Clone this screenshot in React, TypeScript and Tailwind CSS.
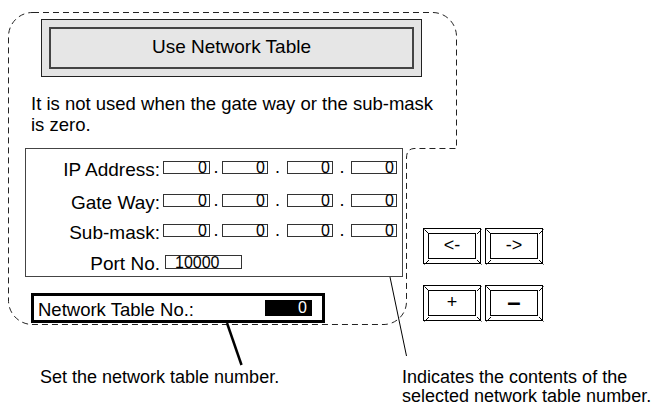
import React from "react";

function Field({ value }: { value: string }) {
  return (
    <div className="h-[13px] border border-[#333] flex justify-end items-start pr-[2px] text-[16px] leading-[12px]">
      {value}
    </div>
  );
}

function Dot({ w }: { w: string }) {
  return <span className={`${w} text-center text-[18px] leading-[13px]`}>.</span>;
}

function AddrRow({ label }: { label: string }) {
  return (
    <div className="flex items-start h-[13px]">
      <span className="w-[134px] text-right text-[19px] leading-[18px] whitespace-nowrap">{label}</span>
      <div className="ml-[3px] w-[47px]">
        <Field value="0" />
      </div>
      <Dot w="w-[12px]" />
      <div className="w-[46px]">
        <Field value="0" />
      </div>
      <Dot w="w-[19px]" />
      <div className="w-[46px]">
        <Field value="0" />
      </div>
      <Dot w="w-[18px]" />
      <div className="w-[46px]">
        <Field value="0" />
      </div>
    </div>
  );
}

function KeyBtn({ label, big }: { label: string; big?: boolean }) {
  // 58 x 36 key with bevelled frame
  return (
    <div className="relative w-[58px] h-[36px] border border-black p-[4px] bg-white">
      <div className="h-full border-[1.5px] border-black flex items-center justify-center">
        <span className={big ? "text-[24px] leading-[22px] pb-[3px] font-bold" : "text-[18px] leading-[18px] pb-[2px]"}>{label}</span>
      </div>
      <svg className="absolute inset-0 pointer-events-none" width="58" height="36">
        <line x1="0.5" y1="0.5" x2="5" y2="5" stroke="#000" strokeWidth="1" />
        <line x1="57.5" y1="0.5" x2="53" y2="5" stroke="#000" strokeWidth="1" />
        <line x1="0.5" y1="35.5" x2="5" y2="31" stroke="#000" strokeWidth="1" />
        <line x1="57.5" y1="35.5" x2="53" y2="31" stroke="#000" strokeWidth="1" />
      </svg>
    </div>
  );
}

export default function App() {
  return (
    <div className="relative w-[660px] h-[406px] overflow-hidden bg-white text-black font-['Liberation_Sans',Arial,sans-serif]">
      {/* top: switch + note */}
      <div className="pt-[19px] pl-[41px]">
        <div className="w-[381px] h-[58px] border border-[#222] bg-[#e4e4e4] p-[7px]">
          <div className="h-full border-2 border-[#444] bg-[#e6e6e6] flex items-center justify-center pb-[4px]">
            <span className="text-[19px] leading-[19px]">Use Network Table</span>
          </div>
        </div>
      </div>
      <p className="ml-[31px] mt-[16px] w-[410px] text-[18.5px] leading-[21px]">
        It is not used when the gate way or the sub-mask is zero.
      </p>

      {/* middle: address panel + table no, keys */}
      <div className="flex mt-[13px]">
        <div className="w-[422px] flex flex-col">
          <div className="ml-[25px] w-[378px] h-[129px] border border-[#444] pt-[12px] flex flex-col">
            <AddrRow label="IP Address:" />
            <div className="mt-[20px]">
              <AddrRow label="Gate Way:" />
            </div>
            <div className="mt-[17px]">
              <AddrRow label="Sub-mask:" />
            </div>
            <div className="mt-[18px] flex items-start h-[13px]">
              <span className="w-[134px] text-right text-[19px] leading-[18px]">Port No.</span>
              <div className="ml-[5px] w-[77px] h-[14px] border border-[#333] pl-[9px] text-[16px] leading-[14px]">
                10000
              </div>
            </div>
          </div>
          <div className="ml-[31px] mt-[16px] w-[294px] h-[30px] border-[3px] border-black flex items-start">
            <span className="pl-[4px] pt-[4px] text-[18.5px] leading-[20px]">Network Table No.:</span>
            <div className="ml-auto mr-[10px] mt-[4px] w-[47px] h-[16px] bg-black text-white text-[16px] leading-[16px] text-right pr-[5px]">
              0
            </div>
          </div>
        </div>
        <div className="pt-[80px] pl-[1px] flex flex-col">
          <div className="flex gap-[4px]">
            <KeyBtn label="<-" />
            <KeyBtn label="->" />
          </div>
          <div className="flex gap-[4px] mt-[21px]">
            <KeyBtn label="+" />
            <KeyBtn label="–" big />
          </div>
        </div>
      </div>

      {/* captions */}
      <div className="flex mt-[45px] text-[18px] leading-[19px]">
        <p className="ml-[40px] w-[362px]">Set the network table number.</p>
        <p>
          Indicates the contents of the
          <br />
          selected network table number.
        </p>
      </div>

      {/* callout outline and leader lines */}
      <svg className="absolute inset-0 pointer-events-none" width="660" height="406">
        <path
          d="M 33 12.5 H 432 A 24 24 0 0 1 456.5 36 V 148.5 H 414 Q 406.5 149 406.5 158 V 301 A 23 23 0 0 1 384 324.5 H 32 A 24 24 0 0 1 8.5 300 V 36 A 24 24 0 0 1 33 12.5 Z"
          fill="none"
          stroke="#222"
          strokeWidth="1"
          strokeDasharray="6 4"
        />
        <line x1="227" y1="323" x2="241.5" y2="365" stroke="#000" strokeWidth="2.5" />
        <line x1="390" y1="277" x2="406.5" y2="356" stroke="#000" strokeWidth="1" />
      </svg>
    </div>
  );
}
